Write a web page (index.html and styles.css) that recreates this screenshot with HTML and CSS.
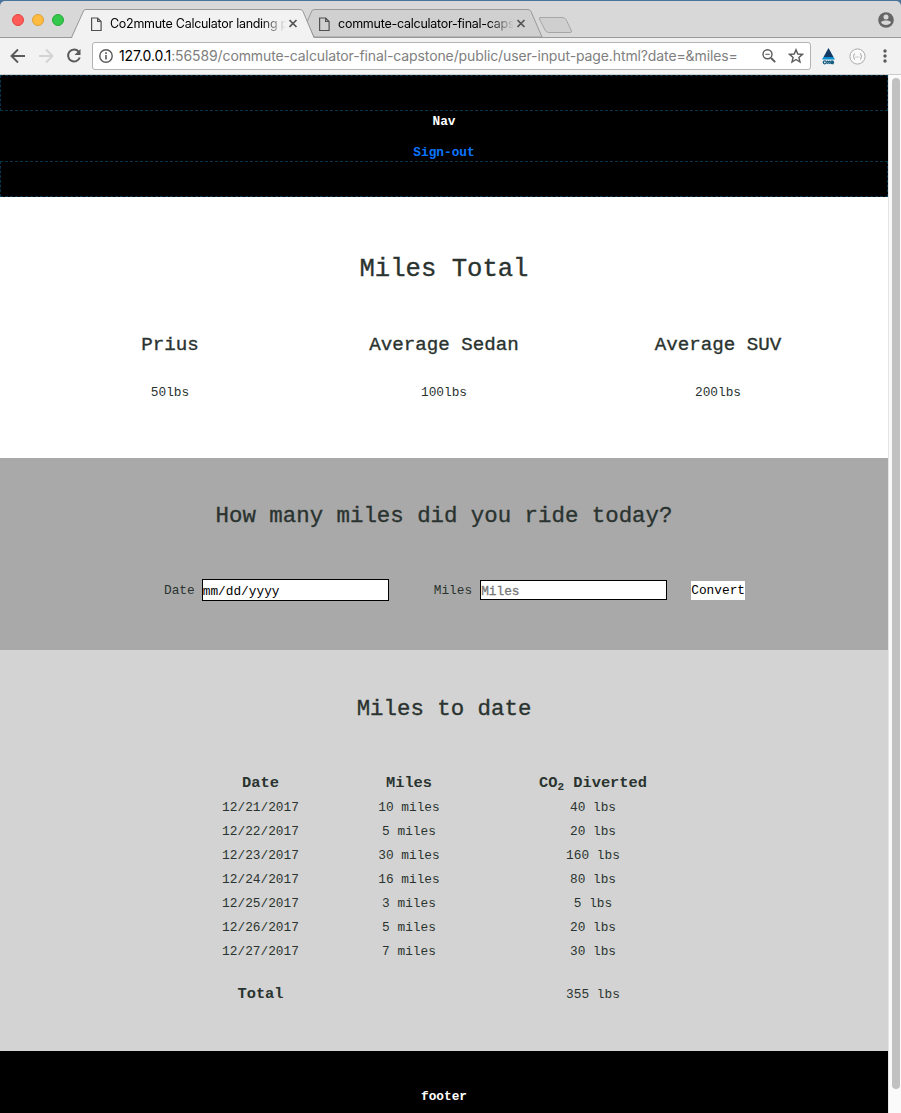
FILE: index.html
```html
<!DOCTYPE html>
<html lang="en">
<head>
<meta charset="utf-8">
<title>Co2mmute Calculator landing page</title>
<link rel="stylesheet" href="styles.css">
</head>
<body>
<div class="desktop">
<div class="browser">
  <div class="tab-strip">
    <svg class="tab-shapes" width="901" height="38" viewBox="0 0 901 38" fill="none">
      <path d="M307 22L312 10.500Q313 9.500 315 9.500H528Q530 9.500 531 11.500L542 37H314Z" fill="#d0d0d0" stroke="#999"/>
      <path d="M0 37.500H901" stroke="#999"/>
      <path d="M72 38L83.500 11Q84 9.500 86 9.500H300Q302 9.500 303 11.500L314 38Z" fill="#f2f2f2"/>
      <path d="M71.500 37.500L83.500 11Q84 9.500 86 9.500H300Q302 9.500 303 11.500L314 37.500" stroke="#999"/>
      <path d="M540 17.500H562Q565 17.500 566 19.500L571.500 31Q572 32.500 570 32.500H549Q546 32.500 545 30L539.500 19Q539 17.500 540 17.500Z" fill="#cfcfcf" stroke="#a6a6a6"/>
    </svg>
    <div class="lights"><i class="light red"></i><i class="light amber"></i><i class="light green"></i></div>
    <div class="tab">
      <svg class="doc" width="12" height="15" viewBox="0 0 12 15" fill="none" stroke="#505050" stroke-width="1.200"><path d="M.600 1H6.600L10.100 4.500V13.500H.600ZM6.600 1V4.500H10.100"/></svg>
      <span class="tab-title first-title">Co2mmute Calculator landing p</span>
      <svg class="close" width="9" height="9" viewBox="0 0 9 9" stroke="#555" stroke-width="1.700"><path d="M.500 1L7.500 8M7.500 1L.500 8"/></svg>
    </div>
    <div class="tab">
      <svg class="doc" width="12" height="15" viewBox="0 0 12 15" fill="none" stroke="#505050" stroke-width="1.200"><path d="M.600 1H6.600L10.100 4.500V13.500H.600ZM6.600 1V4.500H10.100"/></svg>
      <span class="tab-title second-title">commute-calculator-final-caps</span>
      <svg class="close" width="9" height="9" viewBox="0 0 9 9" stroke="#555" stroke-width="1.700"><path d="M.500 1L7.500 8M7.500 1L.500 8"/></svg>
    </div>
    <svg class="avatar" width="16" height="16" viewBox="0 0 16 16"><circle cx="8" cy="8" r="7.800" fill="#666"/><circle cx="8" cy="5" r="2.500" fill="#d8d8d8"/><path d="M3 10.300C4 7.800 12 7.800 13 10.300C11.500 14 4.500 14 3 10.300Z" fill="#d8d8d8"/></svg>
  </div>
  <div class="toolbar">
    <svg class="back" width="16" height="16" viewBox="0 0 16 16" fill="none" stroke="#5a5a5a" stroke-width="1.900"><path d="M15 8H2M8 1.500L1.500 8L8 14.500"/></svg>
    <svg class="forward" width="16" height="16" viewBox="0 0 16 16" fill="none" stroke="#d3d3d3" stroke-width="1.900"><path d="M1 8H14M8 1.500L14.500 8L8 14.500"/></svg>
    <svg class="reload" width="16" height="16" viewBox="0 0 16 16" fill="none"><path d="M12.700 3.600A6 6 0 1 0 13.800 9.500" stroke="#5a5a5a" stroke-width="2"/><path d="M14.500 1V7H8.500Z" fill="#5a5a5a"/></svg>
    <div class="address">
      <svg class="info" width="14" height="14" viewBox="0 0 14 14" fill="none" stroke="#5a5a5a"><circle cx="7" cy="7" r="6.200" stroke-width="1.400"/><path d="M7 6V10.500M7 3.300V5" stroke-width="1.600"/></svg>
      <span class="url"><b>127.0.0.1</b>:56589/commute-calculator-final-capstone/public/user-input-page.html?date=&amp;miles=</span>
      <svg class="magnifier" width="14" height="14" viewBox="0 0 14 14" fill="none" stroke="#5a5a5a"><circle cx="5.500" cy="5.300" r="4.500" stroke-width="1.400"/><path d="M9 9L13.200 13.200" stroke-width="1.900"/><path d="M3.300 5.300H7.700"/></svg>
      <svg class="star" width="16" height="16" viewBox="0 0 16 16" fill="none" stroke="#5a5a5a" stroke-width="1.400"><path d="M8 1.700L9.800 6L14.400 6.400L10.900 9.400L12 14L8 11.500L4 14L5.100 9.400L1.600 6.400L6.200 6Z"/></svg>
    </div>
    <svg class="axe" width="13" height="17" viewBox="0 0 13 17"><path d="M6.500 0L11.500 9H1.500Z" fill="#123a63"/><path d="M1.500 9H11.500L13 11.500H0Z" fill="#0a8ed0"/><g fill="none" stroke="#145c80" stroke-width="1.300"><circle cx="2.800" cy="14.300" r="1.500"/><path d="M5 12.800L8 15.800M8 12.800L5 15.800M11.700 15.700H10A1.400 1.400 0 1 1 11.500 14.300H9"/></g></svg>
    <svg class="braces" width="17" height="17" viewBox="0 0 17 17" fill="none" stroke="#aaa"><circle cx="8.500" cy="8.500" r="7.600" fill="#fafafa"/><path d="M6 5.500Q5 5.500 5 7Q5 8.500 4 8.500Q5 8.500 5 10Q5 11.500 6 11.500M11 5.500Q12 5.500 12 7Q12 8.500 13 8.500Q12 8.500 12 10Q12 11.500 11 11.500M6.500 9H7.500M8.200 9H9M9.700 9H10.500"/></svg>
    <svg class="menu" width="4" height="14" viewBox="0 0 4 14" fill="#5a5a5a"><circle cx="2" cy="2" r="1.700"/><circle cx="2" cy="7" r="1.700"/><circle cx="2" cy="12" r="1.700"/></svg>
  </div>
  <div class="viewport">
    <div class="page">
      <header>
        <div class="dashed"></div>
        <nav><strong>Nav</strong><a>Sign-out</a></nav>
        <div class="dashed"></div>
      </header>
      <section class="totals">
        <h1>Miles Total</h1>
        <div class="cars">
          <div><h3>Prius</h3><p>50lbs</p></div>
          <div><h3>Average Sedan</h3><p>100lbs</p></div>
          <div><h3>Average SUV</h3><p>200lbs</p></div>
        </div>
      </section>
      <section class="ride">
        <h2>How many miles did you ride today?</h2>
        <form class="ride-form">
          <label>Date</label><div class="field date-field">mm/dd/yyyy</div>
          <label class="miles-label">Miles</label><div class="field miles-field">Miles</div>
          <button type="button">Convert</button>
        </form>
      </section>
      <section class="history">
        <h2>Miles to date</h2>
        <div class="log">
          <b>Date</b><b>Miles</b><b>CO<sub>2</sub> Diverted</b>
          <span>12/21/2017</span><span>10 miles</span><span>40 lbs</span>
          <span>12/22/2017</span><span>5 miles</span><span>20 lbs</span>
          <span>12/23/2017</span><span>30 miles</span><span>160 lbs</span>
          <span>12/24/2017</span><span>16 miles</span><span>80 lbs</span>
          <span>12/25/2017</span><span>3 miles</span><span>5 lbs</span>
          <span>12/26/2017</span><span>5 miles</span><span>20 lbs</span>
          <span>12/27/2017</span><span>7 miles</span><span>30 lbs</span>
        </div>
        <div class="log sum"><b>Total</b><span></span><span>355 lbs</span></div>
      </section>
      <footer>footer</footer>
    </div>
    <div class="scrollbar"><div class="thumb"></div></div>
  </div>
</div>
</div>
</body>
</html>
```

FILE: styles.css
```css
* { box-sizing: border-box; }
body { margin: 0; overflow: hidden; }
svg, i { flex: none; display: block; }
h1, h2, h3, p { margin: 0; font-weight: 400; }
.desktop { width: 901px; height: 1113px; background: #48739a; overflow: hidden; }
.browser { height: 1113px; padding-top: 1px; display: flex; flex-direction: column; }

.tab-strip { position: relative; flex: none; height: 37px; display: flex; background: #d8d8d8; border-radius: 5px 5px 0 0; font: 12.500px Inter, sans-serif; color: #000; }
.tab-shapes { position: absolute; left: 0; top: -1px; }
.lights { position: relative; display: flex; gap: 8px; width: 91px; padding: 13px 0 0 12px; }
.light { width: 12px; height: 12px; border-radius: 50%; }
.red { background: #fc5b57; border: 1px solid #e2463f; }
.amber { background: #fdbc40; border: 1px solid #e0a032; }
.green { background: #34c84a; border: 1px solid #27ab38; }
.tab { position: relative; display: flex; width: 228px; }
.doc { margin-top: 16px; margin-right: 7px; }
.tab-title { width: 176px; height: 20px; line-height: 20px; margin: 13px 3px 0 0; white-space: nowrap; -webkit-mask-image: linear-gradient(90deg, #000 86%, transparent); mask-image: linear-gradient(90deg, #000 86%, transparent); }
.first-title { letter-spacing: -0.280px; }
.second-title { letter-spacing: -0.250px; }
.close { margin-top: 18px; }
.avatar { position: relative; margin: 11px 0 0 331px; }

.toolbar { flex: none; height: 37px; background: #f2f2f2; border-bottom: 1px solid #ccc; display: flex; align-items: center; }
.back { margin-left: 10px; }
.forward { margin-left: 12px; }
.reload { margin-left: 12px; }
.address { display: flex; align-items: center; width: 719px; height: 28px; margin-left: 10px; padding-left: 6px; background: #fff; border: 1px solid #b3b3b3; border-radius: 3px; }
.url { width: 643px; margin-left: 6px; white-space: nowrap; font: 14px/20px Inter, sans-serif; letter-spacing: -0.115px; color: #808080; }
.url b { color: #000; font-weight: 400; }
.star { margin-left: 12px; }
.axe { margin-left: 11px; }
.braces { margin-left: 14px; }
.menu { margin-left: 17px; }

.viewport { flex: 1; min-height: 0; display: flex; }
.page { width: 888px; overflow: hidden; display: flex; flex-direction: column; background: #fff; font: 12.800px/20px "Liberation Mono", monospace; color: #2a332f; text-align: center; }
.scrollbar { width: 13px; padding: 3px 0 0 3px; background: #fafafa; border-left: 1px solid #e5e5e5; }
.thumb { width: 8px; height: 1011px; border-radius: 4px; background: #c1c1c1; }

header { height: 122px; background: #000; color: #fff; font-weight: 700; }
.dashed { height: 36px; border: 1px dashed #09344e; }
nav { height: 50px; padding-top: 1px; display: flex; flex-direction: column; gap: 11px; }
nav a { color: #0a75ff; }

.totals { height: 261px; padding: 53px 33px 0; }
h1, h2, h3 { -webkit-text-stroke: 0.350px currentColor; }
h1 { font-size: 25.600px; line-height: 40px; }
.cars { display: grid; grid-template-columns: repeat(3, 1fr); margin-top: 40px; }
h3 { font-size: 19.200px; line-height: 30px; }
.cars p { margin-top: 23px; }

.ride { height: 192px; padding-top: 40px; background: #a9a9a9; }
h2 { font-size: 22.400px; line-height: 36px; }
.ride-form { display: flex; align-items: center; height: 22px; margin-top: 45px; padding-left: 164px; white-space: nowrap; }
label { padding-top: 2px; }
.field { width: 187px; margin-left: 7px; background: #fff; border: 1px solid #000; text-align: left; }
.date-field { height: 22px; color: #000; line-height: 23px; }
.miles-field { height: 20px; margin-left: 8px; color: #757575; line-height: 21px; -webkit-text-stroke: 0.300px currentColor; }
.miles-label { margin-left: 45px; }
button { width: 54px; height: 19px; margin-left: 24px; padding: 1px 0 0; border: 0; background: #fff; color: #000; font: 12.800px/18px "Liberation Mono", monospace; }

.history { height: 401px; padding-top: 41px; background: #d3d3d3; }
.log { display: grid; grid-template-columns: 149px 148px 220px; grid-auto-rows: 24px; width: 517px; margin: 44px 0 0 186px; line-height: 24px; }
.log span { padding-top: 1px; }
.log b { font-size: 15.360px; }
sub { font-size: 11px; line-height: 0; vertical-align: -3px; }
.sum { margin-top: 19px; }
footer { flex: 1; padding-top: 36px; background: #000; color: #fff; font-weight: 700; }
```
